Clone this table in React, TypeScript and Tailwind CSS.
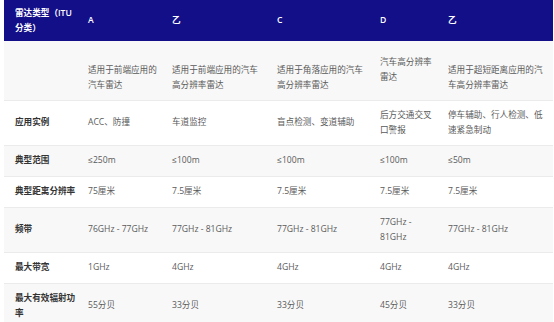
const headers = ["雷达类型（ITU分类）", "A", "乙", "C", "D", "乙"];

// rows: [label, ...cells], height in px
const rows: { h: number; cells: string[] }[] = [
  {
    h: 59,
    cells: [
      "",
      "\n适用于前端应用的汽车雷达",
      "\n适用于前端应用的汽车高分辨率雷达",
      "\n适用于角落应用的汽车高分辨率雷达",
      "汽车高分辨率雷达",
      "\n适用于超短距离应用的汽车高分辨率雷达",
    ],
  },
  { h: 45, cells: ["应用实例", "ACC、防撞", "车道监控", "盲点检测、变道辅助", "后方交通交叉口警报", "停车辅助、行人检测、低速紧急制动"] },
  { h: 31, cells: ["典型范围", "≤250m", "≤100m", "≤100m", "≤100m", "≤50m"] },
  { h: 31, cells: ["典型距离分辨率", "75厘米", "7.5厘米", "7.5厘米", "7.5厘米", "7.5厘米"] },
  { h: 45, cells: ["频带", "76GHz - 77GHz", "77GHz - 81GHz", "77GHz - 81GHz", "77GHz - 81GHz", "77GHz - 81GHz"] },
  { h: 31, cells: ["最大带宽", "1GHz", "4GHz", "4GHz", "4GHz", "4GHz"] },
  { h: 45, cells: ["最大有效辐射功率", "55分贝", "33分贝", "33分贝", "45分贝", "33分贝"] },
];

export default function App() {
  return (
    <div
      className="w-[554px] h-[322px] overflow-hidden bg-white pl-[4px] pr-[1px]"
      style={{ fontFamily: '"Open Sans", "Noto Sans CJK SC", sans-serif' }}
    >
      <table className="table-fixed w-[549px] border-collapse text-[8.6px] leading-[15px]">
        <colgroup>
          <col className="w-[73px]" />
          <col className="w-[84px]" />
          <col className="w-[105px]" />
          <col className="w-[103px]" />
          <col className="w-[68px]" />
          <col className="w-[116px]" />
        </colgroup>
        <thead>
          <tr className="h-[41px] bg-[#130f88] text-white">
            {headers.map((h, i) => (
              <th
                key={i}
                className={`text-left align-middle font-semibold pl-[11px] ${i === 5 ? "pr-[8px]" : "pr-0"}`}
              >
                {h}
              </th>
            ))}
          </tr>
        </thead>
        <tbody>
          {rows.map((r, ri) => (
            <tr
              key={ri}
              style={{ height: r.h }}
              className={`border-b border-[#ebebeb] ${ri % 2 === 0 ? "bg-[#f8f8f8]" : "bg-white"}`}
            >
              {r.cells.map((c, ci) => (
                <td
                  key={ci}
                  className={`align-middle whitespace-pre-line pl-[11px] ${ci === 5 ? "pr-[8px]" : "pr-0"} ${
                    ci === 0 ? "font-bold text-[#333333]" : "text-[#5a5a5a]"
                  }`}
                >
                  {c}
                </td>
              ))}
            </tr>
          ))}
        </tbody>
      </table>
    </div>
  );
}
